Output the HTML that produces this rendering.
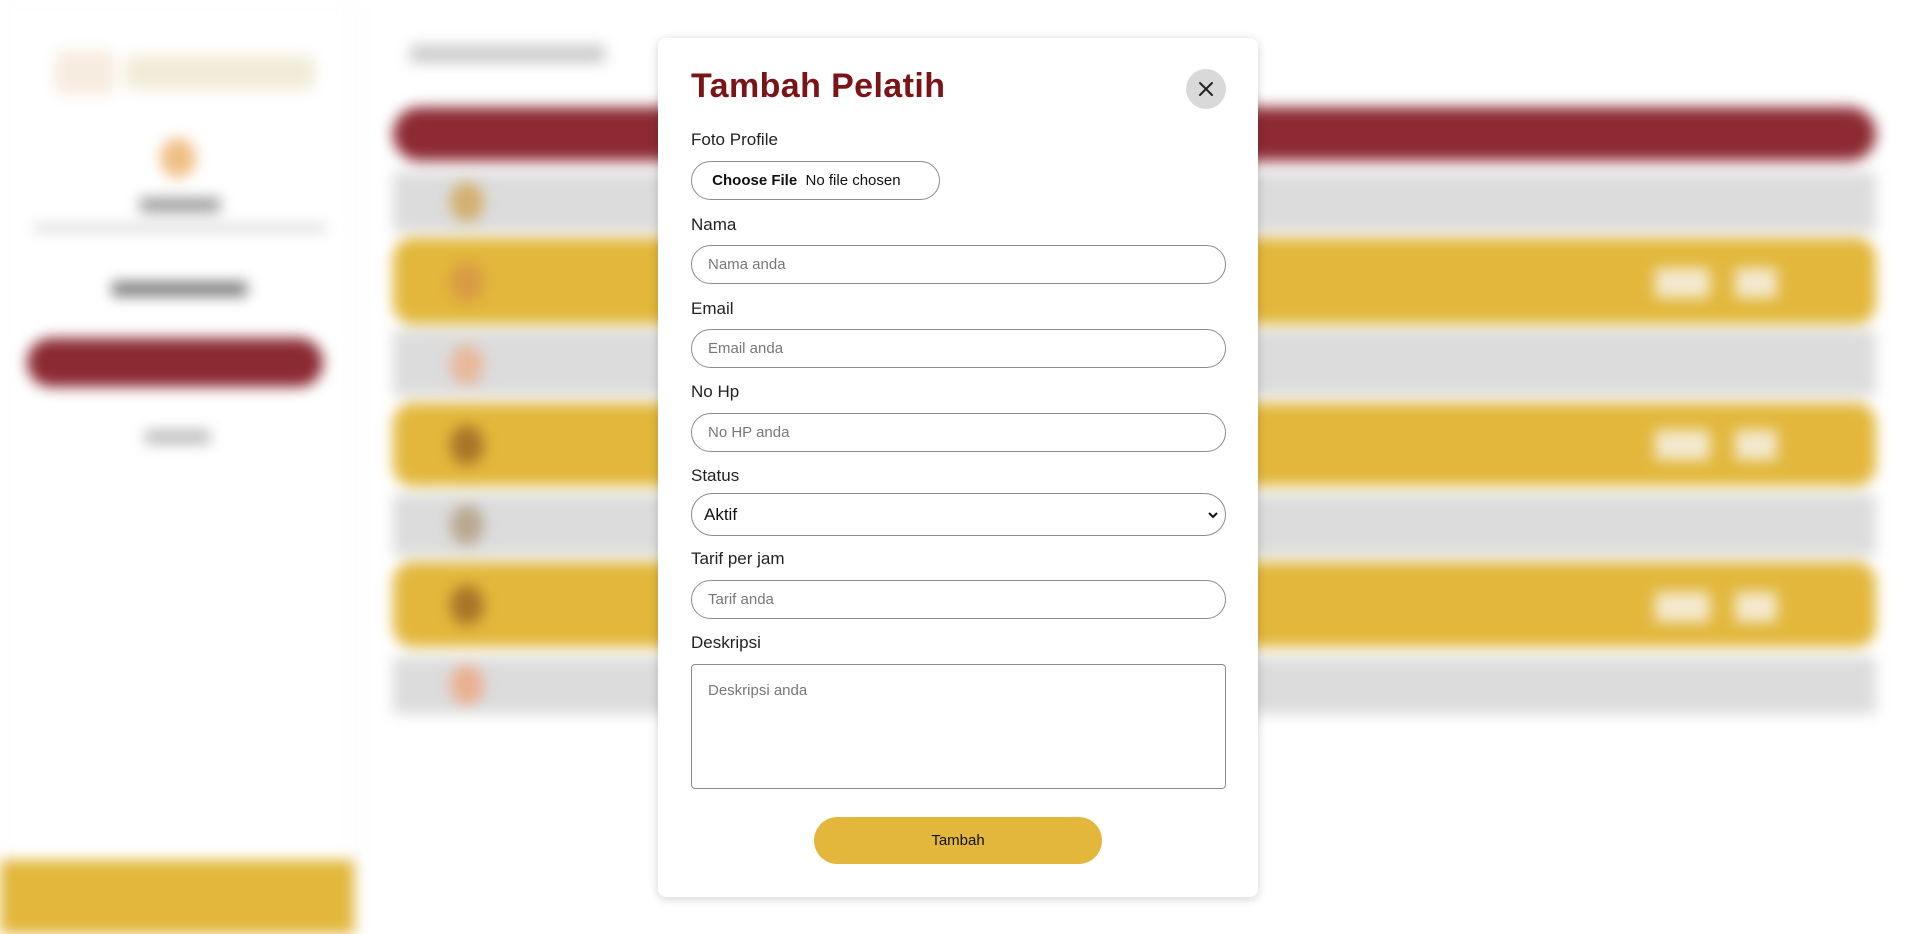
<!DOCTYPE html>
<html><head><meta charset="utf-8"><style>
*{box-sizing:border-box;margin:0;padding:0}
body{width:1914px;height:934px;overflow:hidden;background:#fff;font-family:"Liberation Sans",sans-serif;position:relative}
.bg{position:absolute;inset:0;filter:blur(7px)}
.a{position:absolute}
.modal{position:absolute;left:658px;top:38px;width:600px;height:859px;background:#fff;border-radius:8px;box-shadow:0 2px 10px rgba(0,0,0,.18)}
.t{position:absolute;left:33px;top:29px;font-size:34px;font-weight:bold;color:#7b1416;letter-spacing:.4px}
.close{position:absolute;left:528px;top:31px;width:40px;height:40px;border-radius:50%;background:#d9d9d9}
.lbl{position:absolute;left:33px;font-size:17px;color:#222}
.inp{position:absolute;left:33px;width:535px;height:39px;border:1px solid #8f8a8f;border-radius:20px;font-size:15px;color:#777;padding-left:16px;line-height:37px}
</style></head><body>
<div class="bg">
 <div class="a" style="left:0;top:0;width:354px;height:934px;background:#fff;box-shadow:2px 0 6px rgba(0,0,0,.05)"></div>
 <div class="a" style="left:55px;top:50px;width:60px;height:45px;background:#f7ece0;border-radius:8px"></div>
 <div class="a" style="left:125px;top:55px;width:190px;height:35px;background:#f1ecd8;border-radius:8px"></div>
 <div class="a" style="left:160px;top:138px;width:36px;height:40px;background:#f0bf85;border-radius:50%"></div>
 <div class="a" style="left:140px;top:198px;width:80px;height:14px;background:#999"></div>
 <div class="a" style="left:35px;top:225px;width:290px;height:6px;background:#ccc"></div>
 <div class="a" style="left:112px;top:282px;width:135px;height:14px;background:#777"></div>
 <div class="a" style="left:27px;top:338px;width:296px;height:49px;background:#8b2a33;border-radius:25px"></div>
 <div class="a" style="left:145px;top:430px;width:65px;height:14px;background:#bbb"></div>
 <div class="a" style="left:0;top:860px;width:354px;height:74px;background:#e2b73b"></div>
 <div class="a" style="left:410px;top:45px;width:195px;height:18px;background:#ccc"></div>
 <div class="a" style="left:393px;top:107px;width:1483px;height:54px;background:#8d2a33;border-radius:27px"></div>
 <div class="a" style="left:393px;top:172px;width:1483px;height:60px;background:#dcdcdc"></div>
 <div class="a" style="left:393px;top:238px;width:1483px;height:86px;background:#e2b73b;border-radius:20px"></div>
 <div class="a" style="left:393px;top:330px;width:1483px;height:66px;background:#dcdcdc"></div>
 <div class="a" style="left:393px;top:403px;width:1483px;height:83px;background:#e2b73b;border-radius:20px"></div>
 <div class="a" style="left:393px;top:494px;width:1483px;height:62px;background:#dcdcdc"></div>
 <div class="a" style="left:393px;top:562px;width:1483px;height:85px;background:#e2b73b;border-radius:20px"></div>
 <div class="a" style="left:393px;top:657px;width:1483px;height:57px;background:#dcdcdc"></div>
 <div class="a" style="left:450px;top:182px;width:34px;height:40px;background:#d2b070;border-radius:50%"></div>
 <div class="a" style="left:450px;top:262px;width:34px;height:40px;background:#d99a45;border-radius:50%"></div>
 <div class="a" style="left:450px;top:345px;width:34px;height:40px;background:#e8b89a;border-radius:50%"></div>
 <div class="a" style="left:450px;top:425px;width:34px;height:40px;background:#a77528;border-radius:50%"></div>
 <div class="a" style="left:450px;top:505px;width:34px;height:40px;background:#b9a890;border-radius:50%"></div>
 <div class="a" style="left:450px;top:585px;width:34px;height:40px;background:#a77528;border-radius:50%"></div>
 <div class="a" style="left:450px;top:665px;width:34px;height:40px;background:#eab090;border-radius:50%"></div>
 <div class="a" style="left:1655px;top:268px;width:55px;height:30px;background:#f4ead0"></div>
 <div class="a" style="left:1735px;top:268px;width:42px;height:30px;background:#f4ead0"></div>
 <div class="a" style="left:1655px;top:430px;width:55px;height:30px;background:#f4ead0"></div>
 <div class="a" style="left:1735px;top:430px;width:42px;height:30px;background:#f4ead0"></div>
 <div class="a" style="left:1655px;top:592px;width:55px;height:30px;background:#f4ead0"></div>
 <div class="a" style="left:1735px;top:592px;width:42px;height:30px;background:#f4ead0"></div>
</div>
<div class="modal">
 <div class="t">Tambah Pelatih</div>
 <div class="close"><svg width="40" height="40" viewBox="0 0 40 40"><path d="M14 14L26 26M26 14L14 26" stroke="#222" stroke-width="2" stroke-linecap="round"/></svg></div>
 <div class="lbl" style="top:92px">Foto Profile</div>
 <div class="inp" style="top:123px;width:249px;color:#111;font-size:15px">&nbsp;<b style="font-weight:bold">Choose File</b>&nbsp;&nbsp;No file chosen</div>
 <div class="lbl" style="top:177px">Nama</div>
 <div class="inp" style="top:207px">Nama anda</div>
 <div class="lbl" style="top:261px">Email</div>
 <div class="inp" style="top:291px">Email anda</div>
 <div class="lbl" style="top:344px">No Hp</div>
 <div class="inp" style="top:375px">No HP anda</div>
 <div class="lbl" style="top:428px">Status</div>
 <div class="inp" style="top:455px;height:43px;border-radius:22px;color:#111;font-size:17px;line-height:41px;padding-left:12px">Aktif<svg style="position:absolute;right:6px;top:16px" width="12" height="10" viewBox="0 0 12 10"><path d="M2 3L6 7L10 3" stroke="#111" stroke-width="2" fill="none"/></svg></div>
 <div class="lbl" style="top:511px">Tarif per jam</div>
 <div class="inp" style="top:542px">Tarif anda</div>
 <div class="lbl" style="top:595px">Deskripsi</div>
 <div class="inp" style="top:626px;height:125px;border-radius:4px;line-height:20px;padding-top:16px">Deskripsi anda</div>
 <div class="a" style="left:156px;top:779px;width:288px;height:47px;border-radius:24px;background:#e2b73b;text-align:center;line-height:47px;font-size:15px;color:#111">Tambah</div>
</div>
</body></html>
